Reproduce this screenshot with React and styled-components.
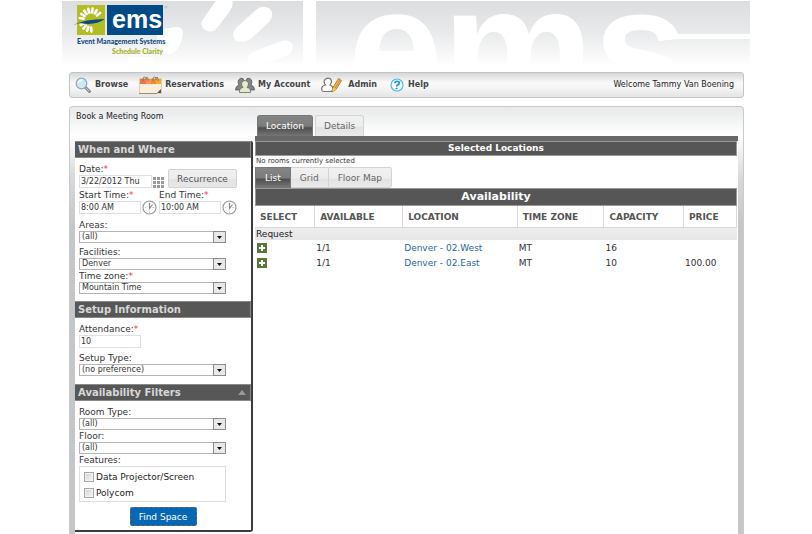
import React, { useState } from "react";
import styled, { createGlobalStyle, css } from "styled-components";

const GlobalStyle = createGlobalStyle`
  *, *::before, *::after { box-sizing: border-box; }
  body {
    margin: 0;
    background: #fff;
    color: #333;
    font: 9px/12px "DejaVu Sans", sans-serif;
  }
  button, input, select { font: inherit; color: inherit; margin: 0; }
`;

const Page = styled.div`
  display: flex;
  flex-direction: column;
  min-height: 100vh;
  margin: 0 62px;
`;

const Banner = styled.header`
  position: relative;
  height: 72px;
  overflow: hidden;
  border-top: 1px solid #fff;
`;

const BannerArt = styled.svg`
  position: absolute;
  inset: 0;
  width: 100%;
  height: 100%;
`;

const Logo = styled.svg`
  position: relative;
  display: block;
  width: 120px;
  height: 58px;
`;

const Shell = styled.div`
  display: flex;
  flex-direction: column;
  flex: 1;
  gap: 8px;
  margin: 0 6px 0 7px;
`;

const Nav = styled.nav`
  display: flex;
  align-items: center;
  height: 26px;
  padding: 0 9px 0 5px;
  border: 1px solid #c3c4c5;
  border-radius: 3px;
  background: linear-gradient(#d6d7d8, #f9f9f9 40%, #f6f6f6 60%, #e4e4e4);
`;

const NavLink = styled.a`
  display: flex;
  align-items: center;
  gap: ${(p) => p.$gap || 4}px;
  margin-right: 11px;
  color: #444;
  font-size: 8px;
  font-weight: bold;
  text-decoration: none;
  white-space: nowrap;
  svg { flex: none; }
`;

const Welcome = styled.span`
  margin-left: auto;
  font-size: 8px;
  color: #222;
  white-space: nowrap;
`;

const Panel = styled.main`
  display: flex;
  flex-direction: column;
  flex: 1;
  padding: 0 5px;
  border: 1px solid #c9cacc;
  border-bottom: 0;
  border-radius: 4px 4px 0 0;
  background: linear-gradient(#e6e8e9 0, #fff 28px, #d8d9da 70px, #c5c6c8 120px);
`;

const PanelTop = styled.div`
  display: flex;
  height: 34px;
`;

const Title = styled.h1`
  width: 180px;
  margin: 4px 0 0;
  padding-left: 1px;
  font-size: 8px;
  font-weight: normal;
  color: #222;
`;

const MainTabs = styled.div`
  display: flex;
  align-items: flex-end;
  flex: 1;
  gap: 2px;
  padding-left: 2px;
  border-bottom: 5px solid #686868;
`;

const tabLook = css`
  border: 1px solid #d3d3d3;
  background: linear-gradient(#f1f1f1, #ececec 55%, #e2e2e2 56%, #eaeaea);
  color: #666;
  height: 21px;
  cursor: pointer;
  &[aria-selected="true"] {
    border-color: #777;
    background: linear-gradient(#858585, #7c7c7c 50%, #505050 60%, #757575);
    color: #fff;
  }
`;

const Tab = styled.button`
  ${tabLook}
  padding: 0 8px;
  border-bottom: 0;
  border-radius: 3px 3px 0 0;
`;

const ViewTabs = styled.div`
  display: flex;
`;

const ViewTab = styled.button`
  ${tabLook}
  padding: 0 9px;
  &:not(:first-child) { border-left: 0; }
  &:last-child { border-radius: 0 3px 3px 0; }
`;

const Body = styled.div`
  display: flex;
  flex: 1;
  gap: 2px;
  align-items: flex-start;
  background: #fff;
`;

const Sidebar = styled.form`
  width: 178px;
  margin-bottom: 2px;
  flex: none;
  border: solid #3c3c3c;
  border-width: 0 2px 2px 0;
  border-radius: 0 2px 3px 0;
  background: #fff;
`;

const SectionHead = styled.h2`
  display: flex;
  align-items: center;
  justify-content: space-between;
  height: 17px;
  margin: 0;
  padding: 0 4px 0 3px;
  border: 1px solid #8a8a8a;
  border-left: 0;
  background: #575757;
  color: #d8d8d8;
  font-size: 10px;
  font-weight: bold;
`;

const Fields = styled.div`
  display: flex;
  flex-direction: column;
  align-items: flex-start;
  padding: 5px 25px ${(p) => p.$bottom ?? 8}px 4px;
`;

const Label = styled.label`
  display: block;
  margin-top: ${(p) => p.$top || 0}px;
  white-space: nowrap;
`;

const Required = styled.span`
  color: #f33;
`;

const FieldRow = styled.div`
  display: flex;
  align-items: flex-end;
`;

const TextInput = styled.input`
  display: block;
  width: ${(p) => p.$width}px;
  height: 13px;
  padding: 0 1px;
  border: 1px solid #dcdfe4;
  background: #fff;
  font-size: 8px;
`;

const IconButton = styled.button`
  display: flex;
  margin: 0 ${(p) => p.$gap}px 0 1px;
  padding: 0;
  border: 0;
  background: none;
`;

const Recurrence = styled.button`
  width: 69px;
  height: 19px;
  padding: 0;
  border: 1px solid #d2d2d2;
  border-radius: 2px;
  background: linear-gradient(#f0f0f0, #ececec 55%, #e2e2e2 56%, #e8e8e8);
  color: #555;
`;

const SelectBox = styled.span`
  position: relative;
  display: block;
  width: 100%;
  height: 12px;
  select {
    appearance: none;
    display: block;
    width: 100%;
    height: 12px;
    padding: 0 14px 0 2px;
    border: 1px solid #b4b4b4;
    border-radius: 0;
    background: #fff;
    font-size: 8px;
    line-height: 10px;
  }
  svg {
    position: absolute;
    top: 0;
    right: 0;
    pointer-events: none;
  }
`;

const Features = styled.fieldset`
  display: flex;
  flex-direction: column;
  gap: 4px;
  width: 100%;
  margin: 0;
  padding: 4px 4px 2px;
  border: 1px solid #dedede;
`;

const Check = styled.label`
  display: flex;
  align-items: center;
  gap: 2px;
  color: #222;
  input {
    appearance: none;
    width: 10px;
    height: 10px;
    border: 1px solid #a5a5a5;
    background: linear-gradient(135deg, #cfd3d6, #f6f6f6);
    box-shadow: inset 0 0 0 1px #f4f4f4;
  }
  input:checked { background: #0a62a9; }
`;

const Find = styled.button`
  align-self: center;
  width: 67px;
  height: 19px;
  margin: 5px 0 0 21px;
  padding: 0;
  border: 1px dashed #6d6d6d;
  border-radius: 2px;
  background: #0667b5;
  color: #fff;
`;

const Results = styled.section`
  flex: 1;
  min-width: 0;
  padding-right: 1px;
`;

const BarTitle = styled.h2`
  height: ${(p) => p.$height}px;
  margin: 0;
  border: 1px solid #999;
  background: #565656;
  color: #fff;
  font-size: ${(p) => p.$size}px;
  line-height: ${(p) => p.$height - 2}px;
  text-align: center;
`;

const Empty = styled.p`
  margin: 0;
  padding-left: 1px;
  font-size: 7px;
  line-height: 11px;
`;

const Grid = styled.table`
  width: 100%;
  border-collapse: separate;
  border-spacing: 0;
  table-layout: fixed;
  th, td { padding: 0 0 0 1px; text-align: left; white-space: nowrap; }
  thead th {
    height: 22px;
    padding-left: 5px;
    border: solid #d9d9d9;
    border-width: 0 1px 1px 0;
    color: #555;
    font-weight: bold;
  }
  tbody th {
    height: 12px;
    background: linear-gradient(#eee, #e6e6e6);
    color: #222;
    font-weight: normal;
  }
  td { height: 15px; }
  a { color: #2a66a6; text-decoration: none; }
  tbody button { display: block; padding: 0; border: 0; margin-left: 1px; background: none; }
  tbody button svg { display: block; }
`;

const Col = styled.col`
  width: ${(p) => p.$share}%;
`;

function BannerBackground() {
  return (
    <BannerArt viewBox="0 0 688 71" preserveAspectRatio="xMinYMin slice" aria-hidden="true">
      <defs>
        <linearGradient id="sky" x1="0" y1="0" x2="0" y2="1">
          <stop offset="0" stopColor="#dcdddf" />
          <stop offset=".45" stopColor="#e9eaeb" />
          <stop offset=".9" stopColor="#fff" />
        </linearGradient>
      </defs>
      <rect width="2000" height="72" fill="url(#sky)" />
      <g fill="#fff">
        <path d="M95 29L114 26Q121 25 121 33Q120 45 112 51Q108 55 103 52L95 42Z" />
        <path d="M66 56H88Q94 60 92 66H72Q66 64 66 56Z" />
        <path d="M155 -2H170Q172 4 168 10L155 27Q151 32 145 30Q138 27 140 20Z" />
        <path d="M174 27L194 9Q201 3 208 8Q213 14 207 21L190 37Q182 43 174 40Q168 34 174 27Z" />
        <path d="M191 51L220 40Q228 38 231 45Q231 52 224 55L199 64Q190 66 186 61Q184 54 191 51Z" />
        <rect x="241" y="-1" width="13" height="73" />
        <text x="286" y="105" fontFamily="'Liberation Sans', Arial, sans-serif" fontWeight="bold" fontSize="170">ems</text>
        <path d="M604 33H2000V38H604Z" />
      </g>
    </BannerArt>
  );
}

function EmsLogo() {
  const rays = [-170, -148, -126, -104, -82, -60, -38, 88, 110, 132, 154];
  return (
    <Logo viewBox="0 0 120 58" role="img" aria-label="ems Event Management Systems">
      <rect x="15" y="4" width="28" height="30" fill="#b2bd25" />
      <g stroke="#fff" strokeWidth="2.600" strokeLinecap="round">
        {rays.map((a) => (
          <line key={a} x1="7.500" x2="11.500" y1="0" y2="0" transform={`translate(29 19) rotate(${a})`} />
        ))}
      </g>
      <path d="M11 24Q23 18 43 18Q33 25 18 22Z" fill="#0b4a82" />
      <rect x="45" y="4" width="56" height="30" fill="#024a86" />
      <text x="50" y="27" fill="#fff" fontFamily="'Liberation Sans', Arial, sans-serif" fontWeight="bold" fontSize="25">ems</text>
      <circle cx="104" cy="6" r="1" fill="none" stroke="#9db2c8" strokeWidth=".6" />
      <g fontFamily="'Liberation Sans Narrow', Lato, sans-serif" fontWeight="900" fontSize="7">
        <text x="15" y="43" fill="#124c80">Event Management Systems</text>
        <text x="101" y="53" fill="#a3b01c" textAnchor="end">Schedule Clarity</text>
      </g>
    </Logo>
  );
}

const BrowseIcon = () => (
  <svg width="16" height="16" viewBox="0 0 16 16" aria-hidden="true">
    <path d="M10.500 10.500L14.500 14.500" stroke="#888" strokeWidth="3" strokeLinecap="round" />
    <path d="M11 11L14 14" stroke="#ccc" strokeLinecap="round" />
    <circle cx="6.500" cy="6.500" r="5.300" fill="#cfe9f8" stroke="#8fa9ba" strokeWidth="1.200" />
    <path d="M3.500 6A3.300 3.300 0 0 1 7 3.200" stroke="#fff" strokeWidth="1.400" fill="none" />
  </svg>
);

const CalendarIcon = () => (
  <svg width="23" height="18" viewBox="0 0 23 18" aria-hidden="true">
    <rect x=".5" y="2.500" width="22" height="15" fill="#faeedd" stroke="#e0cfb5" />
    <rect x="1" y="3" width="6" height="5" fill="#ee7440" />
    <rect x="7" y="3" width="5" height="5" fill="#f4935a" />
    <rect x="12" y="3" width="5" height="5" fill="#f08a2c" />
    <rect x="17" y="3" width="5" height="5" fill="#f7a92b" />
    <g fill="none" stroke="#857567" strokeWidth="1">
      <path d="M4 5V2Q5.500 0 7 2V4M7 2Q8.500 0 9 3V5M14 5V2Q15.500 0 17 2V4M17 2Q18.500 0 19 3V5" />
    </g>
    <path d="M22 13V17H18Z" fill="#555" />
    <path d="M0 17.500H18" stroke="#9b8a75" />
  </svg>
);

const PeopleIcon = () => (
  <svg width="20" height="16" viewBox="0 0 20 16" aria-hidden="true">
    <g fill="#858585" stroke="#555" strokeWidth=".8">
      <path d="M.5 13Q.5 9 4 8Q2.500 6 3.500 3Q5 .5 8 1.500Q10 4 8 8L10 13Z" />
      <path d="M19.500 13Q19.500 9 16 8Q17.500 6 16.500 3Q15 .5 12 1.500Q10 4 12 8L10 13Z" />
    </g>
    <path d="M4.500 15.500Q4 11 8 10.500Q6.500 9 6.500 6.500Q7 3.500 10 3.500Q13 3.500 13.500 6.500Q13.500 9 12 10.500Q16 11 15.500 15.500Z" fill="#e2ebcd" stroke="#666" strokeWidth=".8" />
  </svg>
);

const AdminIcon = () => (
  <svg width="21" height="16" viewBox="0 0 21 16" aria-hidden="true">
    <path d="M.8 13Q0 9 4.500 8Q2.500 6 3.500 3Q5.500 .5 9 1.500Q12 4 9 8Q12 9 12 12Q12 14.500 9 14.500H3Q1 14.500 .8 13Z" fill="#fafafa" stroke="#777" strokeWidth="1.200" />
    <path d="M11 15L12 10.500L17.500 1.500L20.500 3.500L15 12.500Z" fill="#f6b83d" stroke="#8d6a3c" strokeWidth=".8" />
    <path d="M11.300 14.500L12 10.500L15 12.500Z" fill="#f5dc30" />
    <path d="M14 11L19 3" stroke="#e7852c" />
  </svg>
);

const HelpIcon = () => (
  <svg width="16" height="14" viewBox="-2 0 16 14" aria-hidden="true">
    <circle cx="7" cy="7" r="6" fill="#fff" stroke="#4fb8e6" strokeWidth="1.200" />
    <path d="M4.700 5Q5 3.400 7.200 3.400T9.300 5Q9.300 6 8 6.700T6.800 8.500" fill="none" stroke="#229bd8" strokeWidth="1.900" />
    <circle cx="6.700" cy="10.500" r="1.100" fill="#229bd8" />
  </svg>
);

const ClockIcon = () => (
  <svg width="15" height="15" viewBox="0 0 15 15" aria-hidden="true">
    <circle cx="7.500" cy="7.500" r="6.500" fill="#fff" stroke="#999" strokeWidth="1.200" />
    <path d="M7.500 3V8.500L10.500 4.500" fill="none" stroke="#888" strokeWidth="1.200" />
    <path d="M10.500 7.500H12M7.500 11.500V13M3 7.500H4" stroke="#bbb" />
  </svg>
);

const DateGridIcon = () => (
  <svg width="11" height="11" viewBox="0 0 11 11" aria-hidden="true">
    {[0, 4, 8].flatMap((y) =>
      [0, 4, 8].map((x) => <rect key={`${x}-${y}`} x={x} y={y} width="3" height="3" fill="#999" />)
    )}
  </svg>
);

const PlusIcon = () => (
  <svg width="10" height="10" viewBox="0 0 10 10" aria-hidden="true">
    <rect width="10" height="10" fill="#557a3c" />
    <path d="M5 2V8M2 5H8" stroke="#fff" strokeWidth="2" />
  </svg>
);

function Dropdown({ id, label, required, top, value }) {
  return (
    <>
      <Label htmlFor={id} $top={top}>
        {label}:{required && <Required>*</Required>}
      </Label>
      <SelectBox>
        <select id={id} defaultValue={value}>
          <option>{value}</option>
        </select>
        <svg width="13" height="12" viewBox="0 0 13 12" aria-hidden="true">
          <rect x=".5" y=".5" width="12" height="11" fill="#e8e8e8" stroke="#8c8c8c" />
          <path d="M4 5H9L6.500 8Z" fill="#111" />
        </svg>
      </SelectBox>
    </>
  );
}

function TimeField({ id, label, value }) {
  return (
    <div>
      <Label htmlFor={id} $top={1}>{label}:<Required>*</Required></Label>
      <TimeInputRow>
        <TextInput id={id} $width={62} defaultValue={value} />
        <IconButton type="button" $gap={2} aria-label={`Choose ${label}`}><ClockIcon /></IconButton>
      </TimeInputRow>
    </div>
  );
}

const TimeRow = styled.div`
  display: flex;
  height: 26px;
`;

const TimeInputRow = styled.div`
  display: flex;
  align-items: center;
  height: 13px;
`;

const columns = [
  ["SELECT", 12.5], ["AVAILABLE", 18.25], ["LOCATION", 23.75],
  ["TIME ZONE", 18], ["CAPACITY", 16.5], ["PRICE", 11],
];

const rooms = [
  { available: "1/1", location: "Denver - 02.West", zone: "MT", capacity: "16", price: "" },
  { available: "1/1", location: "Denver - 02.East", zone: "MT", capacity: "10", price: "100.00" },
];

export default function App() {
  const [tab, setTab] = useState("Location");
  const [view, setView] = useState("List");
  return (
    <>
      <GlobalStyle />
      <Page>
        <Banner>
          <BannerBackground />
          <EmsLogo />
        </Banner>
        <Shell>
          <Nav>
            <NavLink href="#browse"><BrowseIcon />Browse</NavLink>
            <NavLink href="#reservations" $gap={3}><CalendarIcon />Reservations</NavLink>
            <NavLink href="#account" $gap={3}><PeopleIcon />My Account</NavLink>
            <NavLink href="#admin" $gap={6}><AdminIcon />Admin</NavLink>
            <NavLink href="#help"><HelpIcon />Help</NavLink>
            <Welcome>Welcome Tammy Van Boening</Welcome>
          </Nav>
          <Panel>
            <PanelTop>
              <Title>Book a Meeting Room</Title>
              <MainTabs role="tablist">
                {["Location", "Details"].map((t) => (
                  <Tab key={t} role="tab" aria-selected={tab === t} onClick={() => setTab(t)}>{t}</Tab>
                ))}
              </MainTabs>
            </PanelTop>
            <Body>
              <Sidebar onSubmit={(e) => e.preventDefault()}>
                <SectionHead>When and Where</SectionHead>
                <Fields $bottom={7}>
                  <FieldRow>
                    <div>
                      <Label htmlFor="date">Date:<Required>*</Required></Label>
                      <TextInput id="date" $width={73} defaultValue="3/22/2012 Thu" />
                    </div>
                    <IconButton type="button" $gap={4} aria-label="Choose date"><DateGridIcon /></IconButton>
                    <Recurrence type="button">Recurrence</Recurrence>
                  </FieldRow>
                  <TimeRow>
                    <TimeField id="start" label="Start Time" value="8:00 AM" />
                    <TimeField id="end" label="End Time" value="10:00 AM" />
                  </TimeRow>
                  <Dropdown id="areas" label="Areas" top={5} value="(all)" />
                  <Dropdown id="facilities" label="Facilities" top={3} value="Denver" />
                  <Dropdown id="zone" label="Time zone" required value="Mountain Time" />
                </Fields>
                <SectionHead>Setup Information</SectionHead>
                <Fields>
                  <Label htmlFor="attendance">Attendance:<Required>*</Required></Label>
                  <TextInput id="attendance" $width={62} defaultValue="10" />
                  <Dropdown id="setup" label="Setup Type" top={4} value="(no preference)" />
                </Fields>
                <SectionHead>
                  Availability Filters
                  <svg width="8" height="5" viewBox="0 0 8 5" aria-hidden="true"><path d="M0 5L4 0L8 5Z" fill="#999" /></svg>
                </SectionHead>
                <Fields $bottom={4}>
                  <Dropdown id="room" label="Room Type" value="(all)" />
                  <Dropdown id="floor" label="Floor" value="(all)" />
                  <Label as="span" id="features">Features:</Label>
                  <Features aria-labelledby="features">
                    <Check><input type="checkbox" />Data Projector/Screen</Check>
                    <Check><input type="checkbox" />Polycom</Check>
                  </Features>
                  <Find type="submit">Find Space</Find>
                </Fields>
              </Sidebar>
              <Results>
                <BarTitle $height={15} $size={9}>Selected Locations</BarTitle>
                <Empty>No rooms currently selected</Empty>
                <ViewTabs role="tablist">
                  {["List", "Grid", "Floor Map"].map((v) => (
                    <ViewTab key={v} role="tab" aria-selected={view === v} onClick={() => setView(v)}>{v}</ViewTab>
                  ))}
                </ViewTabs>
                <BarTitle $height={18} $size={11}>Availability</BarTitle>
                <Grid>
                  <colgroup>{columns.map(([name, share]) => <Col key={name} $share={share} />)}</colgroup>
                  <thead>
                    <tr>{columns.map(([name]) => <th key={name} scope="col">{name}</th>)}</tr>
                  </thead>
                  <tbody>
                    <tr><th colSpan={6} scope="rowgroup">Request</th></tr>
                    {rooms.map((r) => (
                      <tr key={r.location}>
                        <td><button type="button" aria-label={`Select ${r.location}`}><PlusIcon /></button></td>
                        <td>{r.available}</td>
                        <td><a href="#room">{r.location}</a></td>
                        <td>{r.zone}</td>
                        <td>{r.capacity}</td>
                        <td>{r.price}</td>
                      </tr>
                    ))}
                  </tbody>
                </Grid>
              </Results>
            </Body>
          </Panel>
        </Shell>
      </Page>
    </>
  );
}
